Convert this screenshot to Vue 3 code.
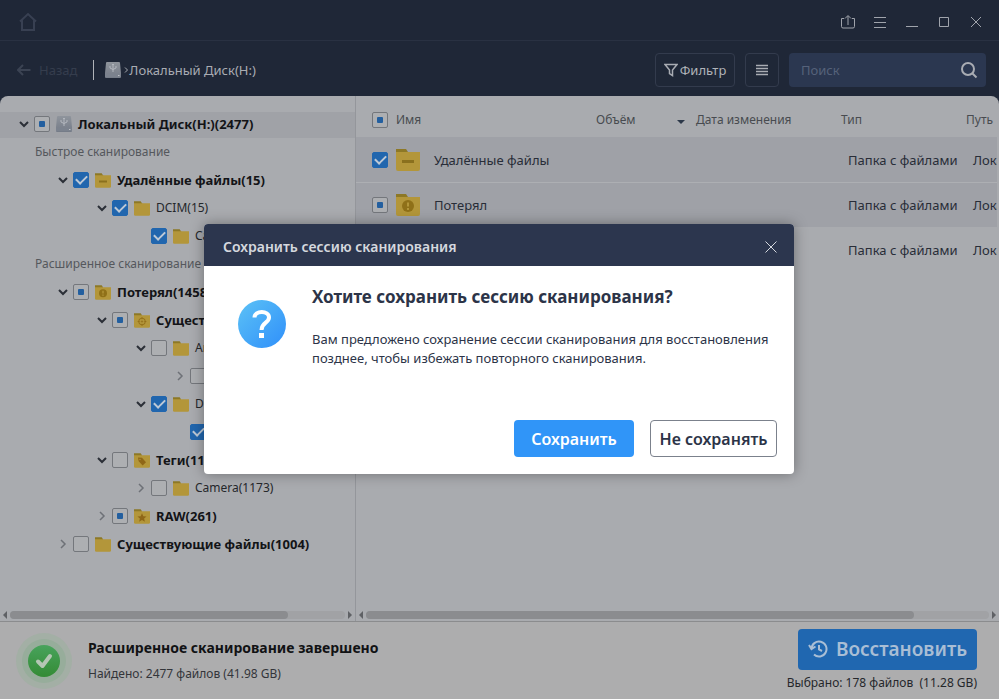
<script setup>
import { ref } from 'vue'

const tree = [
  { level: 0, open: true, state: 'partial', icon: 'disk', text: 'Локальный Диск(H:)(2477)', bold: true, active: true },
  { heading: 'Быстрое сканирование' },
  { level: 1, open: true, state: 'checked', icon: 'minus', text: 'Удалённые файлы(15)', bold: true },
  { level: 2, open: true, state: 'checked', icon: 'plain', text: 'DCIM(15)' },
  { level: 3, leaf: true, state: 'checked', icon: 'plain', text: 'Camera(15)' },
  { heading: 'Расширенное сканирование' },
  { level: 1, open: true, state: 'partial', icon: 'alert', text: 'Потерял(1458)', bold: true },
  { level: 2, open: true, state: 'partial', icon: 'target', text: 'Существующие(24)', bold: true },
  { level: 3, open: true, state: 'empty', icon: 'plain', text: 'Android(9)' },
  { level: 4, open: false, state: 'empty', icon: 'plain', text: 'data(9)' },
  { level: 3, open: true, state: 'checked', icon: 'plain', text: 'DCIM(15)' },
  { level: 4, leaf: true, state: 'checked', icon: 'plain', text: 'Camera(15)' },
  { level: 2, open: true, state: 'empty', icon: 'tag', text: 'Теги(1173)', bold: true },
  { level: 3, open: false, state: 'empty', icon: 'plain', text: 'Camera(1173)' },
  { level: 2, open: false, state: 'partial', icon: 'star', text: 'RAW(261)', bold: true },
  { level: 1, open: false, state: 'empty', icon: 'plain', text: 'Существующие файлы(1004)', bold: true }
]

const files = [
  { name: 'Удалённые файлы', state: 'checked', icon: 'minus', type: 'Папка с файлами', path: 'Локальный Диск', shaded: true },
  { name: 'Потерял', state: 'partial', icon: 'alert', type: 'Папка с файлами', path: 'Локальный Диск', shaded: true },
  { name: 'Существующие файлы', state: 'empty', icon: 'plain', type: 'Папка с файлами', path: 'Локальный Диск' }
]

const query = ref('')
</script>

<template>
  <div class="app">
    <header class="titlebar">
      <a class="home" href="#" aria-label="Главная">
        <svg width="20" height="20" viewBox="0 0 20 20"><path d="M2 9.500 10 2l8 7.500M4 8v10h12V8" /></svg>
      </a>
      <nav class="window-tools">
        <button aria-label="Экспорт"><svg width="16" height="16" viewBox="0 0 16 16"><path d="M4 4.500H1.500v8q0 1.500 1.500 1.500h10q1.500 0 1.500-1.500v-8H12M8 11V2M5 4.500 8 1.500l3 3" /></svg></button>
        <button aria-label="Меню"><svg width="16" height="16" viewBox="0 0 16 16"><path d="M2 3.500h12M2 8.500h12M2 13.500h12" /></svg></button>
        <button aria-label="Свернуть"><svg width="16" height="16" viewBox="0 0 16 16"><path d="M2 12.500h12" /></svg></button>
        <button aria-label="Развернуть"><svg width="16" height="16" viewBox="0 0 16 16"><path d="M3.500 3.500h9v9h-9z" /></svg></button>
        <button aria-label="Закрыть"><svg width="16" height="16" viewBox="0 0 16 16"><path d="m3 3 10 10M13 3 3 13" /></svg></button>
      </nav>
    </header>

    <div class="toolbar">
      <button class="back" disabled>
        <svg width="14" height="12" viewBox="0 0 14 12"><path d="M13.500 6H1M6 1 1 6l5 5" /></svg>
        Назад
      </button>
      <div class="crumbs">
        <svg class="disk" width="16" height="16" viewBox="0 0 16 16"><use href="#disk-shape" /></svg>
        <svg class="crumb-arrow" width="5" height="6" viewBox="0 0 5 6"><path d="m1 .5 2.500 2.500L1 5.500" /></svg>
        <span>Локальный Диск(H:)</span>
      </div>
      <button class="tool filter">
        <svg width="14" height="14" viewBox="0 0 14 14"><path d="M1 1.500h12L8.500 7v5.500L5.500 10.500V7z" /></svg>
        Фильтр
      </button>
      <button class="tool list" aria-label="Вид списка">
        <svg width="14" height="12" viewBox="0 0 14 12"><path d="M1 1.500h12M1 4.500h12M1 7.500h12M1 10.500h12" /></svg>
      </button>
      <label class="search">
        <input v-model="query" type="text" placeholder="Поиск" aria-label="Поиск">
        <svg width="18" height="18" viewBox="0 0 18 18"><circle cx="8" cy="8" r="6" /><path d="m12.500 12.500 4 4" /></svg>
      </label>
    </div>

    <main class="content">
      <section class="sidebar">
        <ul class="tree">
          <li v-for="(node, i) in tree" :key="i" :class="['node', 'level-' + node.level, { active: node.active, heading: node.heading }]">
            <template v-if="node.heading">{{ node.heading }}</template>
            <template v-else>
              <svg :class="['chevron', { closed: !node.open }]" width="12" height="12" viewBox="0 0 12 12">
                <path v-if="!node.leaf" :d="node.open ? 'm2 4 4 4 4-4' : 'm4 2 4 4-4 4'" />
              </svg>
              <label :class="{ bold: node.bold }">
                <input type="checkbox" :checked="node.state === 'checked'" :class="node.state">
                <svg v-if="node.icon === 'disk'" width="16" height="16" viewBox="0 0 16 16"><use href="#disk-shape" /></svg>
                <svg v-else width="16" height="15" viewBox="0 0 24 22"><use href="#folder-shape" /><use :href="'#mark-' + node.icon" /></svg>
                <span>{{ node.text }}</span>
              </label>
            </template>
          </li>
        </ul>
        <div class="scrollbar">
          <i class="left"></i><div class="track"><div class="thumb side-thumb"></div></div><i class="right"></i>
        </div>
      </section>

      <section class="listing">
        <div class="table-view">
          <table>
            <colgroup><col class="c-name"><col class="c-size"><col class="c-date"><col class="c-type"><col class="c-path"></colgroup>
            <thead>
              <tr>
                <th><label class="name-head"><input type="checkbox" class="partial">Имя</label></th>
                <th><span class="size-head">Объём<i></i></span></th>
                <th>Дата изменения</th>
                <th>Тип</th>
                <th>Путь</th>
              </tr>
            </thead>
            <tbody>
              <tr v-for="file in files" :key="file.name" :class="{ shaded: file.shaded }">
                <td>
                  <label class="name-cell">
                    <input type="checkbox" :checked="file.state === 'checked'" :class="file.state">
                    <svg width="24" height="22" viewBox="0 0 24 22"><use href="#folder-shape" /><use :href="'#mark-' + file.icon" /></svg>
                    <span>{{ file.name }}</span>
                  </label>
                </td>
                <td></td>
                <td></td>
                <td>{{ file.type }}</td>
                <td>{{ file.path }}</td>
              </tr>
            </tbody>
          </table>
        </div>
        <div class="scrollbar">
          <i class="left"></i><div class="track"><div class="thumb list-thumb"></div></div><i class="right"></i>
        </div>
      </section>
    </main>

    <footer class="status">
      <svg width="56" height="56" viewBox="0 0 56 56">
        <defs><linearGradient id="done" x1="0" y1="0" x2="0" y2="1"><stop offset="0" stop-color="#48a35c" /><stop offset="1" stop-color="#348b35" /></linearGradient></defs>
        <circle cx="28" cy="28" r="28" fill="#a3afa5" /><circle cx="28" cy="28" r="22" fill="#97ad9b" /><circle cx="28" cy="28" r="16" fill="url(#done)" />
        <path d="m22 28.500 4.500 4.500L34 23" fill="none" stroke="#b4c6b4" stroke-width="4" stroke-linecap="round" stroke-linejoin="round" />
      </svg>
      <div class="summary">
        <strong>Расширенное сканирование завершено</strong>
        <span>Найдено: 2477 файлов (41.98 GB)</span>
      </div>
      <div class="recover">
        <button>
          <svg width="20" height="18" viewBox="0 0 20 18"><path d="M3.500 9a7.500 7.500 0 1 1 2.500 5.600M1 5l2.500 4L7.500 6.500M11 5v4.500l3 1.500" /></svg>
          Восстановить
        </button>
        <span>Выбрано: 178 файлов &nbsp;(11.28 GB)</span>
      </div>
    </footer>

    <div class="overlay">
      <div class="dialog" role="dialog" aria-modal="true" aria-labelledby="dialog-title">
        <div class="dialog-bar">
          <span id="dialog-title">Сохранить сессию сканирования</span>
          <button aria-label="Закрыть окно"><svg width="12" height="12" viewBox="0 0 12 12"><path d="m.5.5 11 11M11.500.5l-11 11" /></svg></button>
        </div>
        <div class="dialog-body">
          <svg class="question" width="48" height="48" viewBox="0 0 48 48">
            <defs><linearGradient id="ask" x1="0" y1="0" x2="1" y2="1"><stop offset="0" stop-color="#5cc2f6" /><stop offset="1" stop-color="#2f8ffa" /></linearGradient></defs>
            <circle cx="24" cy="24" r="24" fill="url(#ask)" />
            <path d="M16.500 17.500c0-7.500 14.500-7.500 14.500 0 0 5.500-7.500 5-7.500 12.500" fill="none" stroke="#fff" stroke-width="4" /><path d="M21 33h5v5h-5z" fill="#fff" />
          </svg>
          <div class="message">
            <h1>Хотите сохранить сессию сканирования?</h1>
            <p>Вам предложено сохранение сессии сканирования для восстановления позднее, чтобы избежать повторного сканирования.</p>
          </div>
        </div>
        <div class="dialog-actions">
          <button class="primary">Сохранить</button>
          <button class="secondary">Не сохранять</button>
        </div>
      </div>
    </div>

    <svg class="sprites" width="0" height="0" aria-hidden="true">
      <defs>
        <linearGradient id="disk-fill" x1="0" y1="0" x2="0" y2="1"><stop offset="0" stop-color="#8f949c" /><stop offset="1" stop-color="#747b87" /></linearGradient>
        <g id="disk-shape">
          <path d="M2 0h12q1 0 1 1l1 10v4q0 1-1 1H1q-1 0-1-1v-4L1 1q0-1 1-1z" fill="url(#disk-fill)" /><path d="M0 12h16v3H0z" fill="#7b828e" />
          <path d="M8 10V2.500M5 4v2l3 1.500M11 4v2L8 7.500M7 3l1-1 1 1" fill="none" stroke="#b3b7be" stroke-width="1" /><path d="M13 13.500h1.500" stroke="#c0c2c6" stroke-width="1" />
        </g>
        <g id="folder-shape"><path d="M0 0h10l2 3v3H0z" fill="#8d7826" /><path d="M0 3h24v17q0 2-2 2H2q-2 0-2-2z" fill="#b3963a" /></g>
        <g id="mark-plain"></g>
        <path id="mark-minus" d="M6 11h12v3H6z" fill="#8a701e" />
        <g id="mark-alert"><circle cx="12" cy="12" r="6" fill="#8f7018" /><path d="M11 8.500h2v4h-2zM11 14h2v2h-2z" fill="#b3963a" /></g>
        <g id="mark-target" fill="none" stroke="#94701a" stroke-width="1.500"><circle cx="12" cy="12.500" r="5" /><circle cx="12" cy="12.500" r="1" /><path d="M12 6v3M12 16v3M5.500 12.500h3M15.500 12.500h3" /></g>
        <g id="mark-tag"><path d="m6 6.500 6 .5 6 6.500-5 5L7 12z" fill="#8f6718" /><circle cx="9" cy="9.500" r="1" fill="#b3963a" /></g>
        <path id="mark-star" d="m12 6 2 4.500 4.800.4-3.600 3.200 1.100 4.900-4.300-2.600L7.700 19l1.100-4.900-3.600-3.200 4.800-.4z" fill="#8f6718" />
      </defs>
    </svg>
  </div>
</template>

<style>
body { margin: 0; }
</style>

<style scoped>
* { box-sizing: border-box; }
.app {
  display: flex;
  flex-direction: column;
  height: 100vh;
  overflow: hidden;
  position: relative;
  background: #1f2737;
  color: #25282e;
  font: 13px/20px "Noto Sans", "Open Sans", sans-serif;
}
.sprites { position: absolute; }
svg { flex: none; }
button { font: inherit; cursor: pointer; }
ul { list-style: none; margin: 0; padding: 0; }

.titlebar { display: flex; align-items: center; justify-content: space-between; height: 41px; padding: 4px 15px 0 18px; border-bottom: 1px solid #293142; }
.titlebar svg { display: block; fill: none; stroke: #a0a4ac; stroke-width: 1; }
.titlebar .home svg { stroke: #384052; stroke-width: 2; }
.window-tools { display: flex; gap: 16px; }
.window-tools button { border: 0; padding: 0; background: none; }

.toolbar { display: flex; align-items: center; height: 55px; padding: 3px 13px 0 17px; }
.toolbar svg { fill: none; stroke: #a9acb3; stroke-width: 1.500; }
.back { display: flex; align-items: center; gap: 8px; height: 20px; padding: 0 16px 0 0; border: 0; border-right: 1px solid #b0b3b8; background: none; color: #353d4d; }
.back svg { stroke: #3b4353; stroke-width: 2; }
.crumbs { display: flex; flex: 1; align-items: center; padding-left: 11px; color: #a9acb3; }
.crumbs .disk { stroke: none; margin-right: 3px; }
.crumbs .crumb-arrow { stroke-width: 1; }
.tool { display: flex; align-items: center; justify-content: center; gap: 2px; height: 34px; padding: 0; border: 1px solid #333b4d; border-radius: 4px; background: none; color: #b0b3b9; }
.filter { width: 80px; margin-right: 10px; }
.list { width: 34px; margin-right: 10px; }
.search { display: flex; align-items: center; width: 197px; height: 34px; padding: 0 8px 0 12px; border-radius: 4px; background: #2b3750; }
.search input { flex: 1; min-width: 0; padding: 0; border: 0; outline: 0; background: none; color: #b0b3b9; font: inherit; }
.search input::placeholder { color: #56627a; opacity: 1; }
.search svg { stroke-width: 2; }

.content { display: flex; flex: 1; min-height: 0; overflow: hidden; border-radius: 8px 8px 0 0; background: #a9abaf; }
.sidebar { display: flex; flex-direction: column; width: 356px; border-right: 1px solid #94969b; }
.tree { flex: 1; padding-top: 14px; white-space: nowrap; overflow: hidden; font-size: 12px; }
.node { display: flex; align-items: center; gap: 4px; height: 28px; padding-left: 18px; color: #25272b; }
.node.heading { padding-left: 35px; color: #55585d; }
.node.active { background: linear-gradient(#a0a2a7, #a0a2a7) 0 2px / 100% 26px no-repeat; }
.level-1 { padding-left: 57px; }
.level-2 { padding-left: 96px; }
.level-3 { padding-left: 135px; }
.level-4 { padding-left: 174px; }
.chevron { fill: none; stroke: #2b2f37; stroke-width: 2; }
.chevron.closed { stroke: #6e7177; stroke-width: 1.500; }
.node label { display: flex; align-items: center; gap: 6px; }
.bold { color: #131417; font-size: 13px; font-weight: 700; }

input[type='checkbox'] { appearance: none; display: grid; place-items: center; flex: none; width: 16px; height: 16px; margin: 0; border: 1px solid #74777c; border-radius: 2px; background: #adafb2; }
input[type='checkbox'].partial::after { content: ''; width: 6px; height: 6px; border-radius: 1px; background: #235f9f; }
input[type='checkbox'].checked { border-color: #2166ae; background: #2166ae; }
input[type='checkbox'].checked::after { content: ''; width: 9px; height: 5px; margin-bottom: 3px; border: solid #bdc9d6; border-width: 0 0 2px 2px; transform: rotate(-45deg); }

.scrollbar { display: flex; align-items: center; gap: 3px; height: 12px; padding: 0 3px; }
.scrollbar i { border: 4px solid transparent; }
.scrollbar .left { border-left: 0; border-right-color: #5f6165; }
.scrollbar .right { border-right: 0; border-left-color: #5f6165; }
.track { flex: 1; height: 8px; border-radius: 4px; background: #a1a2a5; }
.thumb { height: 8px; border-radius: 4px; background: #8b8c8f; }
.side-thumb { width: 83%; }
.list-thumb { width: 88%; }

.listing { display: flex; flex: 1; flex-direction: column; min-width: 0; }
.table-view { flex: 1; overflow: hidden; margin-right: 2px; }
table { width: 100%; min-width: 740px; table-layout: fixed; border-spacing: 0; white-space: nowrap; }
.c-name { width: 240px; }
.c-size { width: 100px; }
.c-date { width: 145px; }
.c-type { width: 125px; }
th { height: 41px; padding: 6px 0 0; color: #484b50; font-size: 12px; font-weight: 400; text-align: left; }
td { height: 45px; padding: 0 0 0 7px; color: #282d38; }
td:first-child, th:first-child { padding-left: 16px; }
.shaded { background: #9fa1a7; }
.shaded + .shaded td { border-top: 1px solid #adafb3; }
.name-head, .name-cell { display: flex; align-items: center; gap: 8px; }
.name-cell span { margin-left: 6px; }
.size-head { display: flex; align-items: center; justify-content: space-between; padding-right: 11px; }
.size-head i { margin-top: 4px; border: 4px solid transparent; border-top-color: #2c3849; border-bottom: 0; }

.status { display: flex; align-items: center; height: 78px; padding: 0 22px 0 16px; border-top: 1px solid #8b8c8e; background: #adadae; }
.summary { display: flex; flex: 1; flex-direction: column; gap: 6px; padding-left: 16px; color: #33353a; font-size: 12px; }
.summary strong { color: #111214; font-size: 14px; }
.recover { display: flex; flex-direction: column; align-items: flex-end; gap: 3px; color: #25272b; font-size: 12px; }
.recover button { display: flex; align-items: center; justify-content: center; gap: 8px; width: 179px; height: 41px; padding: 0; border: 0; border-radius: 4px; background: #2067b0; color: #a9bed5; font-size: 19px; font-weight: 600; }
.recover svg { fill: none; stroke: #a9bed5; stroke-width: 2; }

.overlay { position: absolute; inset: 0; display: grid; place-items: center; padding: 0 1px 1px 0; }
.dialog { width: 590px; max-width: 100%; overflow: hidden; border-radius: 4px; background: #fff; box-shadow: 0 0 14px rgba(0, 0, 0, .35); color: #2c3448; }
.dialog-bar { display: flex; align-items: center; justify-content: space-between; height: 42px; padding: 4px 17px 0 19px; background: #2c364e; color: #d5d8de; font-size: 14px; font-weight: 600; }
.dialog-bar button { padding: 0; border: 0; background: none; }
.dialog-bar svg { display: block; fill: none; stroke: #d5d8de; }
.dialog-body { display: flex; gap: 26px; padding: 20px 17px 0 34px; }
.question { margin-top: 14px; }
h1 { margin: 0; font-size: 17px; line-height: 22px; font-weight: 700; }
p { margin: 22px 0 0; line-height: 19px; }
.dialog-actions { display: flex; justify-content: flex-end; gap: 16px; padding: 52px 17px 17px; }
.dialog-actions button { height: 37px; padding: 0; border-radius: 4px; font-size: 16px; font-weight: 600; }
.primary { width: 120px; border: 0; background: #3095f8; color: #fff; }
.secondary { width: 127px; border: 1px solid #7b818c; background: #fff; color: #2c3448; }
</style>
